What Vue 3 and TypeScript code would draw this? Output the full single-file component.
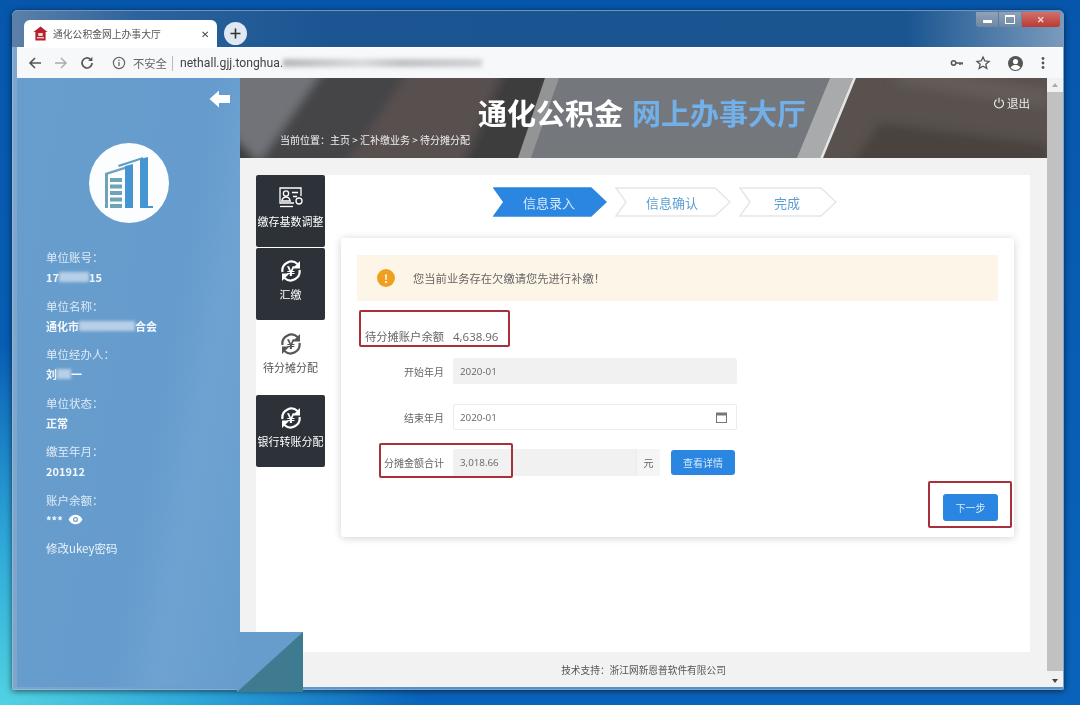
<script setup lang="ts">
interface InfoRow {
  label: string
  value?: string
  head?: string
  mask?: number
  tail?: string
  eye?: boolean
}

const infoRows: InfoRow[] = [
  { label: '单位账号：', head: '17', mask: 30, tail: '15' },
  { label: '单位名称：', head: '通化市', mask: 56, tail: '合会' },
  { label: '单位经办人：', head: '刘', mask: 14, tail: '一' },
  { label: '单位状态：', value: '正常' },
  { label: '缴至年月：', value: '201912' },
  { label: '账户余额：', value: '***', eye: true },
]

const sideTabs = [
  { label: '缴存基数调整', icon: 'card', active: false },
  { label: '汇缴', icon: 'yen', active: false },
  { label: '待分摊分配', icon: 'yen', active: true },
  { label: '银行转账分配', icon: 'yen', active: false },
]

const steps = [
  { label: '信息录入', width: 114, active: true },
  { label: '信息确认', width: 116, active: false },
  { label: '完成', width: 98, active: false },
]

function chevron(w: number) {
  return `1,1 ${w - 16},1 ${w - 1},15 ${w - 16},29 1,29 11,15`
}
</script>

<template>
  <div class="desktop">
    <div class="window">
      <div class="titlebar">
        <div class="tab">
          <svg class="favicon" width="15" height="15" viewBox="0 0 15 15">
            <path d="M7.5 0.5 L14.5 6 L12.6 6 L12.6 14.5 L2.4 14.5 L2.4 6 L0.5 6 Z" fill="#b5202c" />
            <rect x="5.2" y="7" width="4.6" height="3" fill="#f3d0c8" />
            <rect x="4" y="11" width="7" height="1.4" fill="#f3d0c8" />
          </svg>
          <span class="tab-title">通化公积金网上办事大厅</span>
          <span class="tab-close">✕</span>
        </div>
        <div class="new-tab">
          <svg width="13" height="13" viewBox="0 0 13 13"><path d="M6.5 1.5v10M1.5 6.5h10" stroke="#333" stroke-width="1.6" /></svg>
        </div>
        <div class="win-buttons">
          <span class="win-btn"><i class="min-glyph" /></span>
          <span class="win-btn"><i class="max-glyph" /></span>
          <span class="win-btn close"><b>✕</b></span>
        </div>
      </div>

      <div class="toolbar">
        <svg class="tool" width="16" height="16" viewBox="0 0 16 16"><path d="M14 8H3M8 3 3 8l5 5" fill="none" stroke="#555" stroke-width="1.6" /></svg>
        <svg class="tool" width="16" height="16" viewBox="0 0 16 16"><path d="M2 8h11M8 3l5 5-5 5" fill="none" stroke="#aaa" stroke-width="1.4" /></svg>
        <svg class="tool" width="16" height="16" viewBox="0 0 16 16"><path d="M13 8a5 5 0 1 1-1.6-3.7" fill="none" stroke="#555" stroke-width="1.7" /><path d="M13.4 1.8v4.2H9.2z" fill="#555" /></svg>
        <div class="omnibox">
          <svg width="14" height="14" viewBox="0 0 14 14"><circle cx="7" cy="7" r="5.6" fill="none" stroke="#666" stroke-width="1.2" /><path d="M7 6v4M7 3.8v1.2" stroke="#666" stroke-width="1.3" /></svg>
          <span class="insecure">不安全</span>
          <span class="omni-sep" />
          <span class="url">nethall.gjj.tonghua.</span>
          <span class="url-mask" />
        </div>
        <div class="tool-right">
          <svg width="14" height="14" viewBox="0 0 14 14"><circle cx="3.6" cy="7" r="2.2" fill="none" stroke="#555" stroke-width="1.5" /><path d="M5.8 7h7M10 7v2M12.2 7v1.6" stroke="#555" stroke-width="1.5" /></svg>
          <svg width="16" height="16" viewBox="0 0 16 16"><path d="M8 2l1.8 4 4.2.4-3.2 2.8 1 4.2L8 11.2l-3.8 2.2 1-4.2L2 6.4 6.2 6z" fill="none" stroke="#555" stroke-width="1.3" /></svg>
          <svg class="profile" width="17" height="17" viewBox="0 0 17 17"><circle cx="8.5" cy="8.5" r="7.5" fill="#555" /><circle cx="8.5" cy="6.6" r="2.6" fill="#fff" /><path d="M3.6 12.6c1.4-2 3-2.6 4.9-2.6s3.500.6 4.900 2.600c-1.300 1.500-3 2.300-4.900 2.300s-3.600-.8-4.900-2.300z" fill="#fff" /></svg>
          <svg class="kebab" width="4" height="14" viewBox="0 0 4 14"><circle cx="2" cy="2.500" r="1.400" fill="#555" /><circle cx="2" cy="7" r="1.400" fill="#555" /><circle cx="2" cy="11.500" r="1.400" fill="#555" /></svg>
        </div>
      </div>

      <div class="page">
        <aside class="sidebar">
          <svg class="back" width="22" height="18" viewBox="0 0 22 18"><path d="M0.500 9 10 0.500V5h11v8H10v4.500z" fill="#fff" /></svg>
          <div class="logo">
            <svg width="80" height="80" viewBox="0 0 80 80">
              <path d="M16 65V30l22-7v2.500L19 31.500V65z" fill="#6fa3b8" />
              <path d="M21 35h12v4H21zM21 41.500h12v4H21zM21 48h12v4H21zM21 54.500h12v4H21zM21 61h12v4H21z" fill="#6fa3b8" />
              <path d="M29 22l25-8v2L30 24z" fill="#5f9cc0" />
              <path d="M36 23l8-2v44h-8z" fill="#4595d2" />
              <path d="M51 16l8-2v49h5v2H51z" fill="#4595d2" />
            </svg>
          </div>
          <div class="info">
            <div v-for="row in infoRows" :key="row.label" class="info-row">
              <div class="info-label">{{ row.label }}</div>
              <div class="info-value">
                <template v-if="row.value">{{ row.value }}</template>
                <template v-else>
                  {{ row.head }}<i class="mask" :style="{ width: row.mask + 'px' }" />{{ row.tail }}
                </template>
                <svg v-if="row.eye" class="eye" width="15" height="11" viewBox="0 0 15 11"><path d="M0.500 5.500C2.500 2 5 .7 7.500 .7s5 1.300 7 4.800c-2 3.500-4.500 4.800-7 4.800s-5-1.300-7-4.800z" fill="#fff" /><circle cx="7.500" cy="5.500" r="2.500" fill="#6a9fcf" /><circle cx="7.500" cy="5.500" r="1.200" fill="#fff" /></svg>
              </div>
            </div>
            <div class="info-link">修改ukey密码</div>
          </div>
        </aside>

        <div class="main">
          <header class="banner">
            <svg class="banner-art" width="807" height="80" viewBox="0 0 807 80">
              <defs>
                <filter id="soft" x="-20%" y="-20%" width="140%" height="140%"><feGaussianBlur stdDeviation="5" /></filter>
              </defs>
              <rect width="807" height="80" fill="#58514d" />
              <g filter="url(#soft)">
                <rect x="-10" y="-10" width="330" height="100" fill="#4f4c4d" />
                <path d="M-10 -10H115L40 90H-10z" fill="#717378" />
                <path d="M85 -10H175L100 90H15z" fill="#454546" />
                <path d="M170 -10H270L220 90H105z" fill="#58504f" />
                <path d="M265 -10H312L282 90H222z" fill="#3d3d3d" />
                <path d="M-10 55 25 90H-10z" fill="#3a3a3a" />
                <path d="M640 45 807 66V90H610z" fill="#4a423e" />
                <path d="M650 5 807 30V10L680 -10z" fill="#635b57" />
              </g>
              <path d="M318 0H592L558 80H284z" fill="#74777c" />
              <path d="M305 0h14L291 80h-13z" fill="#939496" />
              <path d="M590 0H613L580 80H557z" fill="#a9aaac" />
              <path d="M613 0h3L583 80h-3z" fill="#e4e4e4" />
            </svg>
            <h1 class="banner-title">通化公积金<span>网上办事大厅</span></h1>
            <div class="breadcrumb">当前位置：主页 &gt; 汇补缴业务 &gt; 待分摊分配</div>
            <div class="logout">
              <svg width="12" height="12" viewBox="0 0 12 12"><path d="M3.600 2.700a4.500 4.500 0 1 0 4.800 0M6 .8v5" fill="none" stroke="#eee" stroke-width="1.100" /></svg>
              退出
            </div>
          </header>

          <div class="content">
            <div class="panel">
              <nav class="side-tabs">
                <div v-for="tab in sideTabs" :key="tab.label" class="side-tab" :class="{ active: tab.active }">
                  <svg v-if="tab.icon === 'card'" width="26" height="24" viewBox="0 0 26 24" fill="none" stroke="currentColor" stroke-width="1.300">
                    <path d="M23 10V2H2v15h14" />
                    <circle cx="8" cy="7.500" r="2.600" />
                    <path d="M3.800 15c.6-3 2.200-4 4.200-4s3.600 1 4.200 4zM14 6.500h6M15 10.500h4" />
                    <circle cx="21" cy="15" r="3" />
                    <path d="M2 20.500h13" />
                  </svg>
                  <svg v-else width="24" height="24" viewBox="0 0 24 24" fill="none" stroke="currentColor">
                    <path d="M3.500 13A9 9 0 0 1 18.500 5" stroke-width="2.200" />
                    <path d="M21 2v7.500h-7.500z" fill="currentColor" stroke="none" />
                    <path d="M20.500 11A9 9 0 0 1 5.500 19" stroke-width="2.200" />
                    <path d="M3 22v-7.500h7.500z" fill="currentColor" stroke="none" />
                    <text x="12" y="17" text-anchor="middle" font-size="14" font-weight="700" fill="currentColor" stroke="none">¥</text>
                  </svg>
                  <span>{{ tab.label }}</span>
                </div>
              </nav>

              <div class="workspace">
                <div class="steps">
                  <div
                    v-for="step in steps"
                    :key="step.label"
                    class="step"
                    :class="{ active: step.active }"
                    :style="{ width: step.width + 'px' }"
                  >
                    <svg :width="step.width" height="30" :viewBox="`0 0 ${step.width} 30`">
                      <polygon :points="chevron(step.width)" />
                    </svg>
                    <span>{{ step.label }}</span>
                  </div>
                </div>

                <section class="card">
                  <div class="alert">
                    <i class="alert-icon">!</i>
                    <span>您当前业务存在欠缴请您先进行补缴！</span>
                  </div>

                  <div class="form">
                    <div class="form-row balance">
                      <label>待分摊账户余额</label>
                      <span class="plain">4,638.96</span>
                      <i class="mark mark-balance" />
                    </div>
                    <div class="form-row">
                      <label>开始年月</label>
                      <div class="field disabled">2020-01</div>
                    </div>
                    <div class="form-row">
                      <label>结束年月</label>
                      <div class="field">
                        2020-01
                        <svg width="11" height="11" viewBox="0 0 11 11"><rect x=".5" y="1" width="10" height="9.500" fill="none" stroke="#777" /><rect x=".5" y="1" width="10" height="2.500" fill="#777" /></svg>
                      </div>
                    </div>
                    <div class="form-row total">
                      <label>分摊金额合计</label>
                      <div class="group">
                        <div class="field disabled grow">3,018.66</div>
                        <div class="addon">元</div>
                      </div>
                      <button class="btn detail">查看详情</button>
                      <i class="mark mark-total" />
                    </div>
                  </div>

                  <div class="actions">
                    <button class="btn next">下一步</button>
                    <i class="mark mark-next" />
                  </div>
                </section>
              </div>
            </div>
          </div>

          <footer class="footer">技术支持：浙江网新恩普软件有限公司</footer>
        </div>

        <div class="scrollbar">
          <i class="arrow up" />
          <div class="thumb" />
          <i class="arrow down" />
        </div>

        <svg class="corner" width="66" height="60" viewBox="0 0 66 60">
          <rect width="66" height="60" fill="#679dcd" />
          <path d="M66 0V60H0z" fill="#3f7b90" />
        </svg>
      </div>
    </div>
  </div>
</template>

<style>
html,
body {
  margin: 0;
  background: #0a5fb4;
}
</style>

<style scoped>
.desktop {
  width: 1080px;
  height: 705px;
  overflow: hidden;
  box-sizing: border-box;
  padding: 10px 16px 0 12px;
  background:
    radial-gradient(ellipse 420px 360px at 0 705px, #52d2e2 0, #2ea8d8 45%, rgba(20, 120, 200, 0) 100%),
    linear-gradient(180deg, #0657ac, #0a63bb);
  font-family: "Noto Sans CJK SC", "Liberation Sans", sans-serif;
  filter: blur(0.35px);
}
.window {
  width: 1052px;
  height: 680px;
  box-sizing: border-box;
  padding: 0 1px 3px 5px;
  border-radius: 6px 6px 2px 2px;
  display: flex;
  flex-direction: column;
  background: linear-gradient(90deg, #7fa6cc 0, #5a8fc4 40%, #5a8fc4 100%);
  box-shadow: 0 1px 6px rgba(0, 0, 0, 0.6), inset 0 0 0 1px rgba(255, 255, 255, 0.2);
}
.titlebar {
  height: 37px;
  flex: none;
  display: flex;
  align-items: flex-end;
  margin: 0 -1px 0 -5px;
  padding-left: 12px;
  position: relative;
  border-radius: 6px 6px 0 0;
  border-top: 1px solid #6c94bf;
  box-sizing: border-box;
  background: linear-gradient(90deg, #5d80a8 0, #2c639c 12%, #1c5592 30%, #1a5590 85%, #7a9bbd 100%);
}
.tab {
  width: 193px;
  height: 27px;
  box-sizing: border-box;
  background: #fff;
  border-radius: 6px 6px 0 0;
  display: flex;
  align-items: center;
  padding: 0 8px 0 9px;
  gap: 5px;
}
.tab-title {
  font-size: 9.800px;
  color: #555;
  flex: 1;
  white-space: nowrap;
}
.tab-close {
  font-size: 10px;
  color: #444;
}
.new-tab {
  width: 23px;
  height: 23px;
  margin: 0 0 2px 7px;
  border-radius: 50%;
  background: #dfe8f3;
  display: flex;
  align-items: center;
  justify-content: center;
}
.win-buttons {
  position: absolute;
  top: 1px;
  right: 4px;
  height: 15px;
  display: flex;
  gap: 1px;
  border-radius: 0 0 3px 3px;
  overflow: hidden;
}
.win-btn {
  width: 22px;
  height: 15px;
  display: flex;
  align-items: center;
  justify-content: center;
  background: linear-gradient(180deg, #8fa3b8, #6f87a1);
}
.win-btn.close {
  width: 38px;
  background: linear-gradient(180deg, #d2706a, #bc3a34);
  color: #f3dcd8;
  font-size: 9px;
}
.min-glyph {
  width: 9px;
  height: 3px;
  background: #fff;
  margin-top: 4px;
}
.max-glyph {
  width: 8px;
  height: 6px;
  border: 1px solid #fff;
  border-top-width: 2px;
}
.toolbar {
  height: 31px;
  flex: none;
  background: #f6f8fa;
  display: flex;
  align-items: center;
  padding-left: 10px;
  gap: 10px;
  border-top: 1px solid #fff;
  box-sizing: border-box;
}
.tool {
  flex: none;
}
.omnibox {
  margin-left: 4px;
  display: flex;
  align-items: center;
  gap: 6px;
  height: 22px;
  padding-left: 3px;
  width: 400px;
}
.insecure {
  font-size: 11.300px;
  color: #666;
  margin-left: 1px;
}
.omni-sep {
  width: 1px;
  height: 15px;
  background: #bbb;
  margin: 0 1px 0 -1px;
}
.url {
  font-family: Roboto, "Liberation Sans", sans-serif;
  font-size: 12.200px;
  color: #444;
  white-space: nowrap;
}
.url-mask {
  width: 199px;
  height: 8px;
  margin-left: -6px;
  background: linear-gradient(90deg, #b5b8bb, #d8dadb 40%, #bfc1c3 60%, #d0d2d3);
  filter: blur(2px);
}
.tool-right {
  margin-left: auto;
  display: flex;
  align-items: center;
  gap: 11px;
  padding-right: 18px;
}
.profile {
  margin-left: 5px;
}
.kebab {
  margin-left: 6px;
}
.page {
  flex: 1;
  min-height: 0;
  display: flex;
  position: relative;
}
.sidebar {
  width: 223px;
  flex: none;
  background: linear-gradient(100deg, #689ecd 0, #659ccd 60%, #6ea3d1 75%, #669dcc 100%);
  color: #fff;
  display: flex;
  flex-direction: column;
  position: relative;
}
.back {
  position: absolute;
  top: 12px;
  right: 9px;
}
.logo {
  width: 80px;
  height: 80px;
  border-radius: 50%;
  background: #fbfdfe;
  margin: 65px 0 0 72px;
}
.info {
  margin: 24px 0 0 29px;
  font-size: 11.500px;
}
.info-row {
  height: 48.500px;
}
.info-label {
  line-height: 20px;
  color: #dfeaf5;
}
.info-value {
  line-height: 20px;
  font-weight: 700;
  font-size: 11px;
  display: flex;
  align-items: center;
  color: #f4f8fc;
}
.mask {
  display: inline-block;
  height: 10px;
  background: #b7cfe7;
  filter: blur(1.500px);
}
.eye {
  margin-left: 5px;
}
.info-link {
  margin-top: 0;
  color: #eaf2f9;
  line-height: 20px;
}
.main {
  flex: 1;
  min-width: 0;
  display: flex;
  flex-direction: column;
  background: #f2f2f2;
}
.banner {
  height: 80px;
  flex: none;
  position: relative;
  overflow: hidden;
  color: #fff;
}
.banner-art {
  position: absolute;
  inset: 0;
}
.banner-title {
  position: absolute;
  top: 16px;
  left: 238px;
  margin: 0;
  font-size: 29px;
  line-height: 36px;
  font-weight: 700;
  white-space: nowrap;
}
.banner-title span {
  color: #72b0ea;
  margin-left: 9px;
}
.breadcrumb {
  position: absolute;
  left: 40px;
  top: 54px;
  font-size: 10px;
  line-height: 16px;
  color: #f0f0f0;
}
.logout {
  position: absolute;
  right: 17px;
  top: 16px;
  font-size: 11.500px;
  line-height: 18px;
  display: flex;
  align-items: center;
  gap: 2px;
  color: #eee;
}
.content {
  flex: 1;
  min-height: 0;
  padding: 17px 17px 0 16px;
  display: flex;
}
.panel {
  flex: 1;
  background: #fff;
  display: flex;
}
.side-tabs {
  width: 69px;
  flex: none;
  display: flex;
  flex-direction: column;
  gap: 1px;
}
.side-tab {
  height: 72px;
  background: #2d3238;
  color: #fff;
  border-radius: 2px;
  display: flex;
  flex-direction: column;
  align-items: center;
  padding-top: 11px;
  box-sizing: border-box;
  font-size: 11px;
  line-height: 16px;
  gap: 3px;
  white-space: nowrap;
}
.side-tab.active {
  height: 73px;
  background: #fff;
  color: #555;
}
.workspace {
  flex: 1;
  min-width: 0;
  padding: 12px 16px 0 16px;
}
.steps {
  display: flex;
  gap: 8px;
  margin-left: 152px;
  height: 30px;
}
.step {
  position: relative;
  height: 30px;
  display: flex;
  align-items: center;
  justify-content: center;
  font-size: 13px;
  color: #5b9fd3;
}
.step svg {
  position: absolute;
  inset: 0;
}
.step polygon {
  fill: #fff;
  stroke: #e4e6e8;
  stroke-width: 1.500;
}
.step.active polygon {
  fill: #2a86e0;
  stroke: #2a86e0;
}
.step.active {
  color: #d5ebfb;
}
.step span {
  position: relative;
  margin-left: -2px;
}
.card {
  margin-top: 21px;
  height: 299px;
  box-sizing: border-box;
  padding: 17px 16px 0;
  background: #fff;
  border-radius: 3px;
  box-shadow: 0 1px 8px rgba(0, 0, 0, 0.18);
  position: relative;
}
.alert {
  height: 46px;
  background: #fdf5e8;
  display: flex;
  align-items: center;
  padding-left: 20px;
  font-size: 11.300px;
  color: #666;
  gap: 18px;
}
.alert-icon {
  width: 18px;
  height: 18px;
  border-radius: 50%;
  background: #f0a020;
  color: #fff;
  font-style: normal;
  font-weight: 700;
  font-size: 11px;
  line-height: 18px;
  text-align: center;
}
.form {
  margin-top: 23px;
}
.form-row {
  display: flex;
  align-items: center;
  height: 26px;
  margin-bottom: 20px;
  position: relative;
  font-size: 10px;
  color: #666;
}
.form-row.balance {
  height: 24px;
  margin-bottom: 10px;
}
.form-row.balance label {
  font-size: 11.300px;
}
.form-row.total {
  margin-bottom: 0;
  margin-top: -1px;
  height: 27px;
}
.form-row label {
  width: 87px;
  margin-right: 9px;
  text-align: right;
  white-space: nowrap;
}
.plain {
  font-size: 11.500px;
  font-family: "Open Sans", "Liberation Sans", sans-serif;
  color: #666;
}
.field {
  width: 284px;
  height: 100%;
  box-sizing: border-box;
  padding: 0 9px 0 6px;
  display: flex;
  align-items: center;
  justify-content: space-between;
  border: 1px solid #ececec;
  border-radius: 2px;
  font-family: "Open Sans", "Liberation Sans", sans-serif;
  font-size: 9.800px;
}
.field.disabled {
  background: #f1f1f1;
  border-color: #f1f1f1;
}
.group {
  width: 207px;
  height: 100%;
  display: flex;
}
.field.grow {
  flex: 1;
  width: auto;
  border-radius: 2px 0 0 2px;
}
.addon {
  width: 23px;
  display: flex;
  align-items: center;
  justify-content: center;
  background: #f5f5f5;
  border-left: 1px solid #eaeaea;
}
.btn {
  border: 0;
  padding: 0;
  background: #2a86e0;
  color: #d8ecfb;
  border-radius: 3px;
  font-family: inherit;
  font-size: 10px;
}
.detail {
  width: 64px;
  height: 25px;
  margin-left: 11px;
}
.actions {
  position: absolute;
  right: 16px;
  top: 256px;
}
.next {
  display: block;
  width: 55px;
  height: 27px;
}
.mark {
  position: absolute;
  border: 2px solid #a82f3c;
  border-radius: 2px;
  box-sizing: border-box;
  pointer-events: none;
}
.mark-balance {
  left: 2px;
  top: -14px;
  width: 151px;
  height: 37px;
}
.mark-total {
  left: 22px;
  top: -6px;
  width: 134px;
  height: 35px;
}
.mark-next {
  left: -15px;
  top: -13px;
  width: 84px;
  height: 47px;
}
.footer {
  height: 35px;
  flex: none;
  display: flex;
  align-items: center;
  justify-content: center;
  font-size: 9.700px;
  color: #555;
}
.scrollbar {
  width: 16px;
  flex: none;
  background: #f1f1f1;
  display: flex;
  flex-direction: column;
  align-items: center;
}
.thumb {
  flex: 1;
  width: 100%;
  margin: 5px 0 4px;
  background: #c1c1c1;
}
.arrow {
  width: 0;
  height: 0;
  border-left: 3px solid transparent;
  border-right: 3px solid transparent;
  margin: 5px 0 0;
}
.arrow.up {
  border-bottom: 4px solid #aaa;
}
.arrow.down {
  border-top: 4px solid #444;
  margin: 4px 0 4px;
}
.corner {
  position: absolute;
  left: 220px;
  top: 554px;
}
</style>
